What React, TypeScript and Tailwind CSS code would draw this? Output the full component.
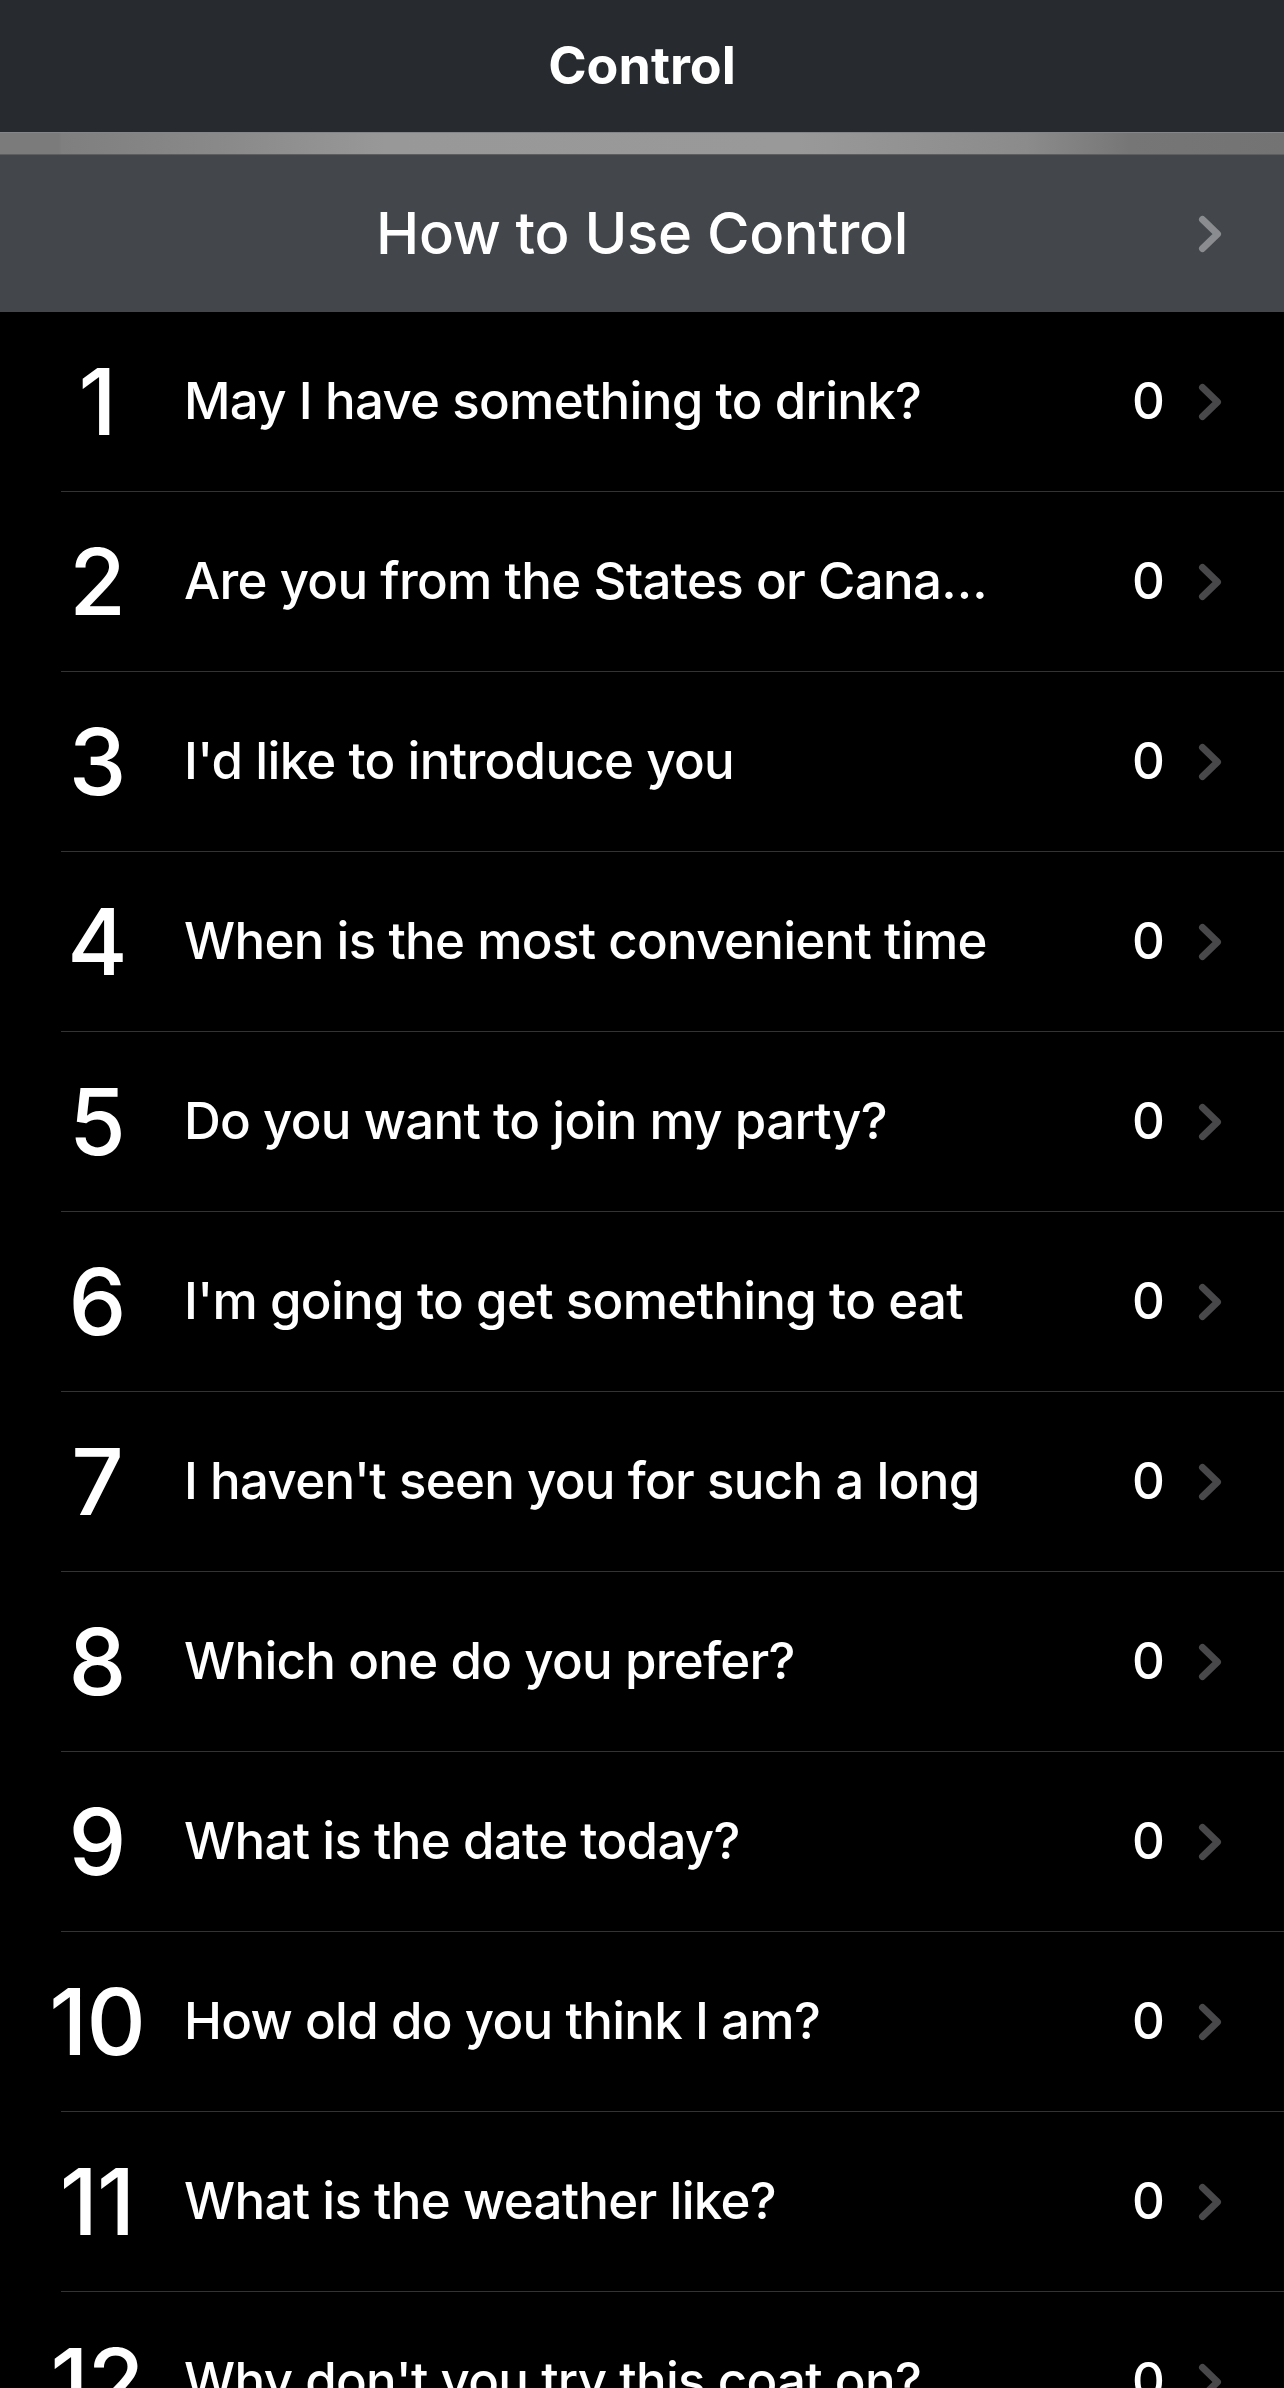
import React from "react";

const phrases = [
  "May I have something to drink?",
  "Are you from the States or Cana…",
  "I'd like to introduce you",
  "When is the most convenient time",
  "Do you want to join my party?",
  "I'm going to get something to eat",
  "I haven't seen you for such a long",
  "Which one do you prefer?",
  "What is the date today?",
  "How old do you think I am?",
  "What is the weather like?",
  "Why don't you try this coat on?",
];

function Chevron({ color }: { color: string }) {
  return (
    <svg width="24" height="38" viewBox="0 0 24 38" fill="none" className="shrink-0">
      <path
        d="M4.5 4.5 L19.5 19 L4.5 33.5"
        stroke={color}
        strokeWidth="7"
        strokeLinecap="round"
        strokeLinejoin="round"
      />
    </svg>
  );
}

function PhraseRow({ n, text }: { n: number; text: string }) {
  return (
    <div>
      <div className="flex h-[179px] items-center pr-[62px]">
        <span className="ml-[32px] w-[130px] shrink-0 text-center text-[92px] font-medium leading-none tracking-[-1px] text-white">
          {n}
        </span>
        <span className="ml-[22px] min-w-0 flex-1 truncate py-2 text-[51px] font-medium leading-[1.3] tracking-[-0.7px] text-white">
          {text}
        </span>
        <span className="ml-4 text-[51px] font-medium leading-[1.3] text-white">0</span>
        <span className="ml-[33px]">
          <Chevron color="#48484b" />
        </span>
      </div>
      <div className="ml-[61px] h-px bg-[#333336]" />
    </div>
  );
}

export default function App() {
  return (
    <div
      className="h-[2388px] w-full overflow-hidden bg-black"
      style={{ fontFamily: "Inter, 'Noto Sans', sans-serif" }}
    >
      <header className="flex h-[132px] items-center justify-center bg-[#272a2e]">
        <h1 className="text-[52px] font-bold leading-none text-white">Control</h1>
      </header>

      <div className="h-[23px] border-t border-[#858687] border-b border-b-[#5c5e60] bg-[linear-gradient(to_right,#7b7b7b_0%,#7b7b7b_4.6%,#7f7f7f_4.8%,#8a8a8a_18%,#989898_30%,#999999_62%,#8b8b8b_80%,#767676_88%,#737373_100%)]" />

      <div className="relative flex h-[157px] items-center justify-center bg-[#43474b]">
        <span className="text-[58px] font-medium leading-[1.3] tracking-[-0.3px] text-white">
          How to Use Control
        </span>
        <span className="absolute right-[62px] top-1/2 -translate-y-1/2">
          <Chevron color="#8a8c8f" />
        </span>
      </div>

      <div>
        {phrases.map((p, i) => (
          <PhraseRow key={i} n={i + 1} text={p} />
        ))}
      </div>
    </div>
  );
}
